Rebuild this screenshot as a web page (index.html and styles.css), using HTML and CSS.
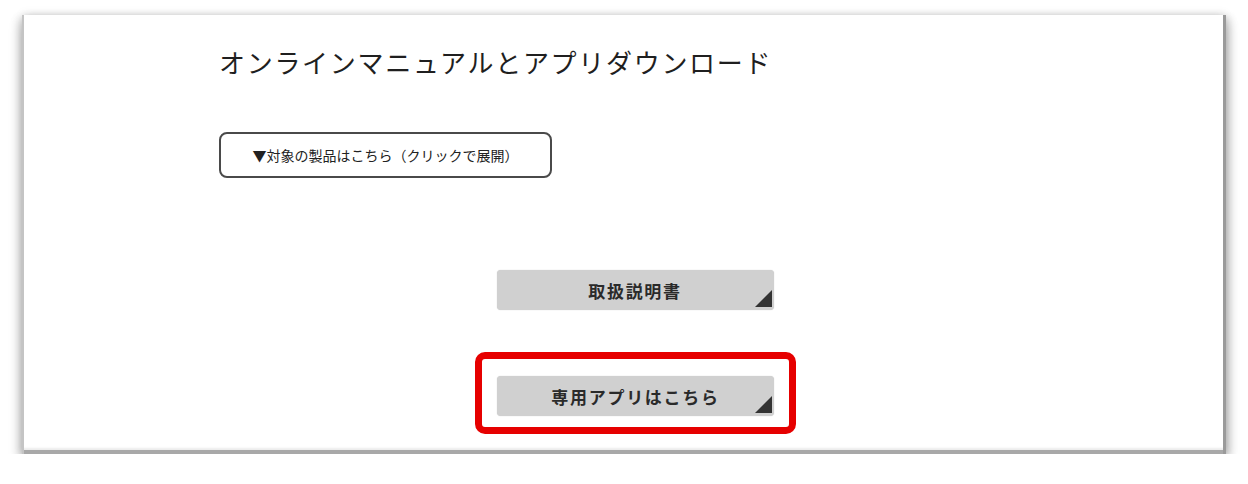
FILE: index.html
```html
<!DOCTYPE html>
<html lang="ja">
<head>
<meta charset="utf-8">
<title>オンラインマニュアルとアプリダウンロード</title>
<link rel="stylesheet" href="styles.css">
</head>
<body>
<div class="frame">
  <div class="content">
    <h2 class="title">オンラインマニュアルとアプリダウンロード</h2>
    <button class="toggle" type="button">▼対象の製品はこちら（クリックで展開）</button>
    <div class="links">
      <a class="link-btn" href="#">取扱説明書</a>
      <div class="highlight">
        <a class="link-btn" href="#">専用アプリはこちら</a>
      </div>
    </div>
  </div>
</div>
</body>
</html>
```
FILE: styles.css
```css
html, body {
  margin: 0;
  padding: 0;
  background: #ffffff;
}

body {
  font-family: "Noto Sans CJK JP", "Noto Sans", sans-serif;
  color: #222;
}

/* Page card with a bevelled edge and soft drop shadow */
.frame {
  margin: 15px 22px 0 22px;
  height: 439px;
  box-sizing: border-box;
  background: #fff;
  box-shadow:
    inset 2px 0 0 #c4c4c4,
    inset -3px 0 0 #9a9a9a,
    inset 0 -4px 0 #a8a8a8,
    inset 0 -6px 2px rgba(0, 0, 0, 0.08),
    0 8px 12px rgba(0, 0, 0, 0.26),
    -4px 2px 8px rgba(0, 0, 0, 0.10),
    4px 2px 8px rgba(0, 0, 0, 0.14),
    0 -3px 8px rgba(0, 0, 0, 0.05);
}

.content {
  margin-left: 197px;
  width: 832px;
  padding-top: 29px;
  display: flex;
  flex-direction: column;
  align-items: flex-start;
}

.title {
  margin: 0;
  font-size: 26px;
  font-weight: 400;
  line-height: 36px;
  letter-spacing: 1.7px;
  color: #1f1f1f;
}

.toggle {
  margin-top: 52px;
  width: 333px;
  height: 46px;
  box-sizing: border-box;
  border: 2px solid #4a4a4a;
  border-radius: 8px;
  background: #fff;
  font-family: inherit;
  font-size: 14px;
  color: #222;
  padding: 0;
  cursor: pointer;
}

.links {
  align-self: stretch;
  margin-top: 92px;
  display: flex;
  flex-direction: column;
  align-items: center;
}

.link-btn {
  position: relative;
  display: flex;
  align-items: center;
  justify-content: center;
  width: 277px;
  height: 40px;
  box-sizing: border-box;
  background: #d0d0d0;
  border-radius: 4px;
  box-shadow: 0 0 1px rgba(0, 0, 0, 0.25);
  font-size: 17px;
  font-weight: 700;
  letter-spacing: 1.7px;
  color: #2a2a2a;
  text-decoration: none;
}

/* Corner arrow mark */
.link-btn::after {
  content: "";
  position: absolute;
  right: 2px;
  bottom: 3px;
  width: 0;
  height: 0;
  border-style: solid;
  border-width: 0 0 17px 17px;
  border-color: transparent transparent #333 transparent;
}

.highlight {
  margin-top: 42px;
  width: 321px;
  height: 82px;
  box-sizing: border-box;
  border: 7px solid #e60000;
  border-radius: 10px;
  display: flex;
  justify-content: center;
  padding: 17px 0 0 1px;
}
```
